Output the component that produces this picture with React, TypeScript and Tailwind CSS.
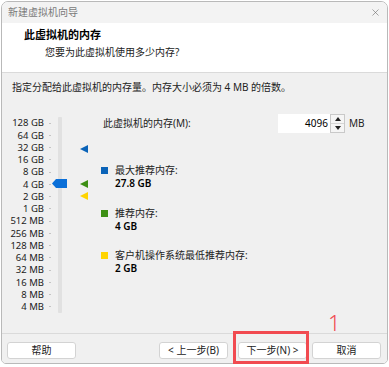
import { X } from "lucide-react";

const scale = [
  "128 GB",
  "64 GB",
  "32 GB",
  "16 GB",
  "8 GB",
  "4 GB",
  "2 GB",
  "1 GB",
  "512 MB",
  "256 MB",
  "128 MB",
  "64 MB",
  "32 MB",
  "16 MB",
  "8 MB",
  "4 MB",
];

const legend = [
  { color: "bg-[#0a63b8]", label: "最大推荐内存:", value: "27.8 GB", mt: "mt-[31px]" },
  { color: "bg-[#3d8f14]", label: "推荐内存:", value: "4 GB", mt: "mt-[17px]" },
  { color: "bg-[#ffd400]", label: "客户机操作系统最低推荐内存:", value: "2 GB", mt: "mt-[16px]" },
];

// little left-pointing marker beside the slider track
const Marker = ({ top, fill }: { top: string; fill: string }) => (
  <svg className={`absolute left-[78px] ${top}`} width="8" height="8" viewBox="0 0 8 8">
    <path d="M0 4 L8 0 L8 8 Z" fill={fill} />
  </svg>
);

const Button = ({ label, className }: { label: string; className?: string }) => (
  <button
    className={`flex h-[17px] w-[69px] items-center justify-center rounded-[3px] border border-[#d3d3d3] bg-white text-[10px] text-[#222] ${className ?? ""}`}
  >
    {label}
  </button>
);

export default function App() {
  return (
    <div className="relative h-[367px] w-[389px] bg-white pt-[1px] pl-[1px] font-['Noto_Sans','Noto_Sans_CJK_SC',sans-serif]">
      <div className="flex h-[363px] w-[387px] flex-col overflow-hidden rounded-t-[7px] rounded-b-[5px] border border-[#b9b9b9]">
        {/* title bar */}
        <div className="flex h-[21px] shrink-0 items-center justify-between bg-[#f3f3f3] pl-[6px] pr-[6px]">
          <span className="text-[10px] text-[#7a7a7a]">新建虚拟机向导</span>
          <X className="h-[11px] w-[11px] text-[#6a6a6a]" strokeWidth={1.3} />
        </div>

        {/* header */}
        <div className="h-[50px] shrink-0 border-b border-[#dadada] bg-white">
          <div className="pl-[22px] pt-[6px] text-[11px] font-bold leading-[12px] text-black">此虚拟机的内存</div>
          <div className="pl-[43px] pt-[5px] text-[10px] leading-[12px] text-[#222]">您要为此虚拟机使用多少内存?</div>
        </div>

        {/* body */}
        <div className="flex-1 bg-[#f0f0f0]">
          <div className="pl-[10px] pt-[8px] text-[10px] leading-[12px] text-[#222]">
            指定分配给此虚拟机的内存量。内存大小必须为 4 MB 的倍数。
          </div>

          <div className="mt-[21px] flex items-start">
            {/* slider */}
            <div className="relative mt-[3px] flex h-[196px] w-[99px] shrink-0">
              <div className="flex w-[50px] flex-col">
                {scale.map((s) => (
                  <div key={s} className="flex h-[12.25px] items-center">
                    <span className="w-[42px] text-right text-[9.5px] leading-none text-[#222]">{s}</span>
                    <span className="ml-[5px] h-[1px] w-[2px] bg-[#c4c4c4]" />
                  </div>
                ))}
              </div>
              <div className="ml-[6px] h-full w-[4px] rounded-[1px] bg-[#e1e1e1]" />

              {/* thumb */}
              <svg className="absolute left-[50px] top-[62px]" width="15" height="9" viewBox="0 0 15 9">
                <path d="M0 4.5 L4 0 L15 0 L15 9 L4 9 Z" fill="#0a6fd8" />
              </svg>

              <Marker top="top-[28px]" fill="#0a63b8" />
              <Marker top="top-[63px]" fill="#3d8f14" />
              <Marker top="top-[75px]" fill="#ffd400" />
            </div>

            {/* right side */}
            <div className="flex flex-col">
              <div className="flex h-[19px] items-center">
                <span className="ml-[2px] w-[175px] text-[10px] text-[#222]">此虚拟机的内存(M):</span>
                <div className="flex h-[19px] w-[52px] items-center justify-end bg-white pr-[2px] text-[10px] text-black">
                  4096
                </div>
                <div className="flex h-[19px] w-[15px] flex-col border border-[#c9c9c9] bg-[#f5f5f5]">
                  <div className="flex flex-1 items-center justify-center border-b border-[#d6d6d6]">
                    <svg width="6" height="4" viewBox="0 0 6 4">
                      <path d="M0 4 L3 0 L6 4 Z" fill="#222" />
                    </svg>
                  </div>
                  <div className="flex flex-1 items-center justify-center">
                    <svg width="6" height="4" viewBox="0 0 6 4">
                      <path d="M0 0 L6 0 L3 4 Z" fill="#222" />
                    </svg>
                  </div>
                </div>
                <span className="ml-[4px] text-[10px] text-[#222]">MB</span>
              </div>

              {legend.map((l) => (
                <div key={l.label} className={l.mt}>
                  <div className="flex h-[13px] items-center">
                    <span className={`h-[7px] w-[7px] ${l.color}`} />
                    <span className="ml-[7px] text-[10px] leading-[13px] text-[#222]">{l.label}</span>
                  </div>
                  <div className="pl-[14px] text-[10px] font-semibold leading-[13px] text-black">{l.value}</div>
                </div>
              ))}
            </div>
          </div>
        </div>

        {/* footer */}
        <div className="flex h-[30px] shrink-0 items-start border-t border-[#dadada] bg-[#f0f0f0] pt-[8px]">
          <Button label="帮助" className="ml-[5px]" />
          <Button label="< 上一步(B)" className="ml-[83px]" />
          <Button label="下一步(N) >" className="ml-[10px]" />
          <Button label="取消" className="ml-[5px]" />
        </div>
      </div>

      {/* annotation */}
      <div className="pointer-events-none absolute left-[233px] top-[331px] h-[33px] w-[76px] border-[3px] border-[#f14a50]" />
      <span className="pointer-events-none absolute left-[328px] top-[310px] text-[22px] font-light leading-[24px] text-[#f14a50]">
        1
      </span>
    </div>
  );
}
